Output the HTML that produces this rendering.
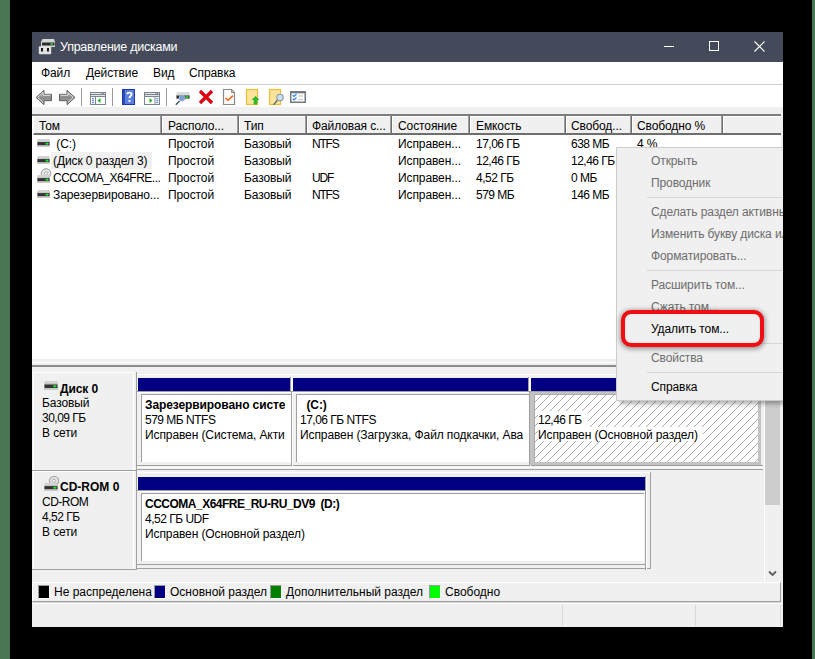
<!DOCTYPE html>
<html><head><meta charset="utf-8">
<style>
*{box-sizing:border-box;margin:0;padding:0}
html,body{width:815px;height:659px;overflow:hidden;background:#000}
body{position:relative;font-family:"Liberation Sans",sans-serif;font-size:12px;color:#000}
.a{position:absolute}
.t{position:absolute;white-space:nowrap;line-height:14px;letter-spacing:-0.1px}
.n{letter-spacing:-0.5px}
.nt{letter-spacing:-1.2px}
.b{font-weight:bold}
.g{left:0;top:0;width:10px;height:659px;background:#4a7552}
#clip{left:0;top:0;width:783px;height:627px;overflow:hidden}
.hsep{position:absolute;top:116px;width:3px;height:17px;border-left:1px solid #a0a0a0;border-right:1px solid #fff;background:#6e6e6e}
.dis{color:#6d6d6d}
.msep{position:absolute;left:647px;width:140px;height:1px;background:#d7d7d7}
</style></head><body>
<div class="a g"></div>
<div class="a g" style="left:812px;width:3px"></div>
<div id="clip" class="a">
  <div class="a" style="left:32px;top:32px;width:751px;height:595px;background:#f0f0f0"></div>
  <!-- title bar -->
  <div class="a" style="left:32px;top:32px;width:751px;height:30px;background:#444a59"></div>
  <div class="t" style="left:60px;top:40px;color:#fff;font-size:12.5px;letter-spacing:-0.25px">Управление дисками</div>
  <div class="a" style="left:664px;top:46px;width:10px;height:1px;background:#fff"></div>
  <div class="a" style="left:709px;top:41px;width:10px;height:10px;border:1px solid #fff"></div>
  <svg class="a" style="left:754px;top:41px" width="11" height="11" viewBox="0 0 11 11"><path d="M0.5 0.5L10.5 10.5M10.5 0.5L0.5 10.5" stroke="#fff" stroke-width="1.1"/></svg>
  <!-- menu bar -->
  <div class="a" style="left:32px;top:62px;width:751px;height:22px;background:#fff"></div>
  <div class="a" style="left:32px;top:84px;width:751px;height:1px;background:#cfcfcf"></div>
  <div class="t" style="left:41px;top:66px">Файл</div>
  <div class="t" style="left:86px;top:66px">Действие</div>
  <div class="t" style="left:153px;top:66px">Вид</div>
  <div class="t" style="left:189px;top:66px">Справка</div>
  <!-- toolbar -->
  <div class="a" style="left:32px;top:85px;width:751px;height:22px;background:#fff"></div>
  <svg class="a" style="left:0;top:0" width="0" height="0"><defs>
    <linearGradient id="ag" x1="0" y1="0" x2="0" y2="1"><stop offset="0" stop-color="#b4b4b4"/><stop offset="0.5" stop-color="#8c8c8c"/><stop offset="1" stop-color="#a4a4a4"/></linearGradient>
    <symbol id="drv" viewBox="0 0 13 9" preserveAspectRatio="none"><path d="M1 0H12L13 3.5V8.5H0V3.5Z" fill="#c6c6c6"/><rect x="1.5" y="0.6" width="10" height="1.2" fill="#dedede"/><rect x="0.5" y="3.5" width="12" height="3.5" fill="#333"/><rect x="0" y="7.5" width="13" height="1.5" fill="#c9c9c9"/><rect x="8.5" y="4.5" width="3" height="1.5" fill="#1fe030"/><rect x="9.5" y="3.8" width="1" height="3" fill="#1fe030"/></symbol>
  </defs></svg>
  <!-- title icon -->
  <svg class="a" style="left:38px;top:38px" width="18" height="17" viewBox="0 0 18 17"><path d="M4.5 1H16L17 4V9H3V4Z" fill="#d8d8d8"/><rect x="4" y="4.5" width="12.5" height="3" fill="#2c2c2c"/><rect x="12.5" y="5.3" width="2.5" height="1.5" fill="#2fe83c"/><rect x="0.8" y="8.2" width="12.4" height="8" rx="1" fill="#e2e2e2"/><rect x="3" y="10" width="2" height="3.5" fill="#1a1a1a"/><rect x="9" y="10" width="2" height="3.5" fill="#1a1a1a"/></svg>
  <!-- toolbar icons -->
  <svg class="a" style="left:35px;top:89px" width="18" height="17" viewBox="0 0 18 17"><path d="M1 8.5L9 1.3V5.3H16.5V11.7H9V15.7Z" fill="url(#ag)" stroke="#626262" stroke-width="1" stroke-linejoin="round"/><path d="M2.6 8.5L8 3.6V6.3H15.5M2.6 8.5L8 13.4" fill="none" stroke="#e8e8e8" stroke-width="0.9"/></svg>
  <svg class="a" style="left:58px;top:89px" width="18" height="17" viewBox="0 0 18 17"><path d="M17 8.5L9 1.3V5.3H1.5V11.7H9V15.7Z" fill="url(#ag)" stroke="#626262" stroke-width="1" stroke-linejoin="round"/><path d="M15.4 8.5L10 3.6V6.3H2.5M15.4 8.5L10 13.4" fill="none" stroke="#e8e8e8" stroke-width="0.9"/></svg>
  <div class="a" style="left:81px;top:88px;width:1px;height:18px;background:#9a9a9a"></div>
  <svg class="a" style="left:90px;top:92px" width="16" height="13" viewBox="0 0 16 13"><rect x="0.5" y="0.5" width="15" height="12" fill="#fff" stroke="#7b8590"/><rect x="1" y="1" width="14" height="1" fill="#e4e4e4"/><rect x="1" y="2" width="14" height="1" fill="#7b8590"/><rect x="1" y="3" width="14" height="1" fill="#e4e4e4"/><rect x="1" y="4" width="14" height="1" fill="#7b8590"/><rect x="11.5" y="1" width="1" height="1" fill="#7b8590"/><rect x="13" y="1" width="1" height="1" fill="#7b8590"/><rect x="5" y="5" width="1" height="7.5" fill="#7b8590"/><rect x="2" y="6.2" width="2" height="1" fill="#3a7ad8"/><rect x="2" y="8.2" width="2" height="1" fill="#3a7ad8"/><rect x="2" y="10.2" width="2" height="1" fill="#3a7ad8"/><path d="M7.5 8.5L10.5 6V11Z" fill="#22b022"/></svg>
  <div class="a" style="left:112px;top:88px;width:1px;height:18px;background:#9a9a9a"></div>
  <svg class="a" style="left:122px;top:89px" width="13" height="16" viewBox="0 0 13 16"><rect x="0" y="0" width="13" height="16" fill="#1c3aa8"/><rect x="3" y="1" width="9" height="14" fill="#5a80dc"/><rect x="1" y="1" width="2" height="14" fill="#2d4cb8"/><path d="M5.2 5.2C5.2 3.3 9.6 3.1 9.6 5.3C9.6 7 7.4 7.3 7.4 9.2" fill="none" stroke="#fff" stroke-width="1.8"/><rect x="6.5" y="11" width="1.9" height="1.9" fill="#fff"/></svg>
  <svg class="a" style="left:144px;top:92px" width="16" height="13" viewBox="0 0 16 13"><rect x="0.5" y="0.5" width="15" height="12" fill="#fff" stroke="#7b8590"/><rect x="1" y="1" width="14" height="1" fill="#e4e4e4"/><rect x="1" y="2" width="14" height="1" fill="#7b8590"/><rect x="1" y="3" width="14" height="1" fill="#e4e4e4"/><rect x="1" y="4" width="14" height="1" fill="#7b8590"/><rect x="11.5" y="1" width="1" height="1" fill="#7b8590"/><rect x="13" y="1" width="1" height="1" fill="#7b8590"/><rect x="10.5" y="5" width="1" height="7.5" fill="#7b8590"/><rect x="12.3" y="6.2" width="2" height="1" fill="#3a7ad8"/><rect x="12.3" y="8.2" width="2" height="1" fill="#3a7ad8"/><rect x="12.3" y="10.2" width="2" height="1" fill="#3a7ad8"/><path d="M8.5 8.5L5.5 6V11Z" fill="#22b022"/></svg>
  <div class="a" style="left:166px;top:88px;width:1px;height:18px;background:#9a9a9a"></div>
  <svg class="a" style="left:175px;top:91px" width="16" height="15" viewBox="0 0 16 15"><path d="M2 1H14L15 3.5V8.5H1V3.5Z" fill="#dcdcdc"/><rect x="1.5" y="4.5" width="13" height="3" fill="#2e2e2e"/><rect x="10.5" y="5.3" width="3" height="1.4" fill="#2fe83c"/><rect x="11.5" y="4.5" width="1" height="3" fill="#2fe83c"/><path d="M4.5 10L0.8 13.8" stroke="#4a5a68" stroke-width="1.6"/><circle cx="7" cy="7" r="2.9" fill="#7aa0d8" stroke="#9ab0c8" stroke-width="1"/></svg>
  <svg class="a" style="left:198px;top:89px" width="16" height="16" viewBox="0 0 16 16"><path d="M2 2L14 14M14 2L2 14" stroke="#e0000f" stroke-width="3.2"/></svg>
  <svg class="a" style="left:222px;top:88px" width="14" height="18" viewBox="0 0 14 18"><path d="M1.5 1.5H9.5L12.5 4.5V16.5H1.5Z" fill="#fbfbfb" stroke="#8a8a8a" stroke-width="1.2"/><path d="M9.5 1.5V4.5H12.5" fill="none" stroke="#8a8a8a" stroke-width="1"/><path d="M3.6 10L6 12.3L11 7.6" fill="none" stroke="#f0641e" stroke-width="1.5"/></svg>
  <svg class="a" style="left:245px;top:88px" width="16" height="18" viewBox="0 0 16 18"><rect x="1.5" y="1.5" width="11" height="15" fill="#fde49a" stroke="#e8be3a" stroke-width="1.2"/><path d="M10.5 8L14.5 12H12.3V16.5H8.7V12H6.5Z" fill="#2cb82c"/></svg>
  <svg class="a" style="left:268px;top:88px" width="17" height="18" viewBox="0 0 17 18"><rect x="1.5" y="1.5" width="11" height="15" fill="#fde49a" stroke="#e8be3a" stroke-width="1.2"/><path d="M9.5 12L5.5 16.8" stroke="#556070" stroke-width="1.3"/><circle cx="12" cy="9.5" r="3.2" fill="#c8e2f4" stroke="#8a96a4" stroke-width="1.1"/></svg>
  <svg class="a" style="left:290px;top:91px" width="16" height="12" viewBox="0 0 16 12"><rect x="0.75" y="0.75" width="14.5" height="10.5" fill="#fff" stroke="#737a80" stroke-width="1.5"/><rect x="0.75" y="0.75" width="14.5" height="1.6" fill="#737a80"/><path d="M2.8 4.2L4 5.4L6.5 3" fill="none" stroke="#2a86e8" stroke-width="1.3"/><path d="M2.8 7.7L4 8.9L6.5 6.5" fill="none" stroke="#2a86e8" stroke-width="1.3"/><rect x="8" y="4.5" width="5" height="0.9" fill="#b8b8b8"/><rect x="8" y="8.2" width="5" height="0.9" fill="#b8b8b8"/></svg>
  <!-- list view -->
  <div class="a" style="left:32px;top:114px;width:749px;height:245px;background:#fff;border-top:2px solid #7d7d7d"></div>
  <div class="a" style="left:33px;top:116px;width:748px;height:19px;background:#f0f0f0;border-bottom:2px solid #6e6e6e;border-left:1px solid #fff;border-top:1px solid #fff"></div>
  <div class="hsep" style="left:160px"></div>
  <div class="hsep" style="left:237px"></div>
  <div class="hsep" style="left:305px"></div>
  <div class="hsep" style="left:390px"></div>
  <div class="hsep" style="left:468px"></div>
  <div class="hsep" style="left:564px"></div>
  <div class="hsep" style="left:630px"></div>
  <div class="hsep" style="left:721px"></div>
  <div class="t" style="left:39px;top:119px">Том</div>
  <div class="t" style="left:168px;top:119px">Располо...</div>
  <div class="t" style="left:244px;top:119px">Тип</div>
  <div class="t" style="left:312px;top:119px">Файловая с...</div>
  <div class="t" style="left:398px;top:119px">Состояние</div>
  <div class="t" style="left:476px;top:119px">Емкость</div>
  <div class="t" style="left:571px;top:119px">Свобод...</div>
  <div class="t" style="left:637px;top:119px">Свободно %</div>
  <!-- rows -->
  <div class="a" style="left:51px;top:152px;width:101px;height:17px;background:#f0f0f0"></div>
  <svg class="a" style="left:37px;top:139px" width="13" height="8"><use href="#drv"/></svg>
  <svg class="a" style="left:37px;top:156px" width="13" height="8"><use href="#drv"/></svg>
  <svg class="a" style="left:40px;top:168px" width="12" height="11" viewBox="0 0 12 11"><circle cx="6" cy="5.5" r="4.8" fill="#e4e4e4" stroke="#9a9a9a" stroke-width="1"/><circle cx="6" cy="5.5" r="1.6" fill="#fff" stroke="#a0a0a0" stroke-width="0.8"/></svg>
  <svg class="a" style="left:37px;top:175px" width="13" height="8"><use href="#drv"/></svg>
  <svg class="a" style="left:37px;top:190px" width="13" height="8"><use href="#drv"/></svg>
  <div class="t" style="left:53px;top:137px">&nbsp;(C:)</div>
  <div class="t" style="left:53px;top:154px">(Диск 0 раздел 3)</div>
  <div class="t n" style="left:53px;top:171px">CCCOMA_X64FRE...</div>
  <div class="t" style="left:53px;top:188px">Зарезервировано...</div>
  <div class="t" style="left:168px;top:137px">Простой</div>
  <div class="t" style="left:168px;top:154px">Простой</div>
  <div class="t" style="left:168px;top:171px">Простой</div>
  <div class="t" style="left:168px;top:188px">Простой</div>
  <div class="t" style="left:244px;top:137px">Базовый</div>
  <div class="t" style="left:244px;top:154px">Базовый</div>
  <div class="t" style="left:244px;top:171px">Базовый</div>
  <div class="t" style="left:244px;top:188px">Базовый</div>
  <div class="t nt" style="left:312px;top:137px">NTFS</div>
  <div class="t nt" style="left:312px;top:171px">UDF</div>
  <div class="t nt" style="left:312px;top:188px">NTFS</div>
  <div class="t" style="left:398px;top:137px">Исправен...</div>
  <div class="t" style="left:398px;top:154px">Исправен...</div>
  <div class="t" style="left:398px;top:171px">Исправен...</div>
  <div class="t" style="left:398px;top:188px">Исправен...</div>
  <div class="t n" style="left:476px;top:137px">17,06 ГБ</div>
  <div class="t n" style="left:476px;top:154px">12,46 ГБ</div>
  <div class="t n" style="left:476px;top:171px">4,52 ГБ</div>
  <div class="t n" style="left:476px;top:188px">579 МБ</div>
  <div class="t n" style="left:571px;top:137px">638 МБ</div>
  <div class="t n" style="left:571px;top:154px">12,46 ГБ</div>
  <div class="t n" style="left:571px;top:171px">0 МБ</div>
  <div class="t n" style="left:571px;top:188px">146 МБ</div>
  <div class="t" style="left:637px;top:137px">4 %</div>

  <!-- splitter -->
  <div class="a" style="left:32px;top:359px;width:751px;height:3px;background:#f0f0f0"></div>
  <div class="a" style="left:32px;top:362px;width:751px;height:1px;background:#fff"></div>
  <div class="a" style="left:32px;top:365px;width:751px;height:2px;background:#8c8c8c"></div>

  <!-- graphic view: disk 0 -->
  <div class="a" style="left:33px;top:372px;width:100px;height:1px;background:#fff"></div>
  <div class="a" style="left:33px;top:372px;width:1px;height:98px;background:#fff"></div>
  <div class="a" style="left:133px;top:372px;width:1px;height:98px;background:#fff"></div>
  <div class="a" style="left:32px;top:470px;width:105px;height:1px;background:#a0a0a0"></div>
  <div class="a" style="left:136px;top:372px;width:1px;height:98px;background:#a0a0a0"></div>
  <div class="a" style="left:137px;top:374px;width:624px;height:1px;background:#fff"></div>
  <div class="a" style="left:137px;top:465px;width:626px;height:1px;background:#a0a0a0"></div>
  <div class="a" style="left:137px;top:467px;width:626px;height:1px;background:#fff"></div>
  <div class="a" style="left:137px;top:469px;width:626px;height:1px;background:#a0a0a0"></div>
  <svg class="a" style="left:44px;top:381px" width="14" height="9"><use href="#drv"/></svg>
  <div class="t b" style="left:60px;top:382px">Диск 0</div>
  <div class="t" style="left:42px;top:396px">Базовый</div>
  <div class="t n" style="left:42px;top:411px">30,09 ГБ</div>
  <div class="t" style="left:42px;top:426px">В сети</div>
  <div class="a" style="left:138px;top:378px;width:152px;height:13px;background:#000080"></div>
  <div class="a" style="left:136px;top:391px;width:157px;height:1px;background:#a0a0a0"></div>
  <div class="a" style="left:137px;top:392px;width:154px;height:1px;background:#fff"></div>
  <div class="a" style="left:141px;top:394px;width:150px;height:1px;background:#a0a0a0"></div>
  <div class="a" style="left:141px;top:394px;width:1px;height:68px;background:#a0a0a0"></div>
  <div class="a" style="left:142px;top:395px;width:149px;height:67px;background:#fff"></div>
  <div class="a" style="left:290px;top:377px;width:1px;height:14px;background:#a0a0a0"></div>
  <div class="a" style="left:291px;top:377px;width:2px;height:14px;background:#fff"></div>
  <div class="a" style="left:291px;top:391px;width:1px;height:75px;background:#a0a0a0"></div>
  <div class="a" style="left:292px;top:392px;width:1px;height:74px;background:#fff"></div>
  <div class="t b" style="left:145px;top:398px;width:140px;overflow:hidden">Зарезервировано систе</div>
  <div class="t n" style="left:145px;top:413px">579 МБ NTFS</div>
  <div class="t" style="left:145px;top:428px;width:140px;overflow:hidden">Исправен (Система, Активен, Основной раздел)</div>
  <div class="a" style="left:293px;top:378px;width:235px;height:13px;background:#000080"></div>
  <div class="a" style="left:291px;top:391px;width:240px;height:1px;background:#a0a0a0"></div>
  <div class="a" style="left:292px;top:392px;width:237px;height:1px;background:#fff"></div>
  <div class="a" style="left:296px;top:394px;width:233px;height:1px;background:#a0a0a0"></div>
  <div class="a" style="left:296px;top:394px;width:1px;height:68px;background:#a0a0a0"></div>
  <div class="a" style="left:297px;top:395px;width:232px;height:67px;background:#fff"></div>
  <div class="a" style="left:528px;top:377px;width:1px;height:14px;background:#a0a0a0"></div>
  <div class="a" style="left:529px;top:377px;width:2px;height:14px;background:#fff"></div>
  <div class="a" style="left:529px;top:391px;width:1px;height:75px;background:#a0a0a0"></div>
  <div class="a" style="left:530px;top:392px;width:1px;height:74px;background:#fff"></div>
  <div class="t b" style="left:300px;top:398px">&nbsp; (C:)</div>
  <div class="t n" style="left:300px;top:413px">17,06 ГБ NTFS</div>
  <div class="t" style="left:300px;top:428px;width:223px;overflow:hidden">Исправен (Загрузка, Файл подкачки, Аварийный дамп, Основной раздел)</div>
  <div class="a" style="left:531px;top:378px;width:230px;height:13px;background:#000080"></div>
  <div class="a" style="left:529px;top:391px;width:232px;height:74px;background:#c3c3c3"></div>
  <div class="a" style="left:529px;top:391px;width:1px;height:74px;background:#a0a0a0"></div>
  <div class="a" style="left:529px;top:391px;width:232px;height:1px;background:#a0a0a0"></div>
  <div class="a" style="left:534px;top:394px;width:224px;height:68px;background:#ababab"></div>
  <svg class="a" style="left:535px;top:395px" width="223" height="67"><defs><pattern id="h" width="8" height="8" patternUnits="userSpaceOnUse" x="5" y="2"><rect width="8" height="8" fill="#fff"/><path d="M-1 9L9 -1" stroke="#ababab" stroke-width="1"/></pattern></defs><rect width="223" height="67" fill="url(#h)"/></svg>
  <div class="a" style="left:538px;top:411px;width:50px;height:16px;background:#fff"></div>
  <div class="a" style="left:538px;top:427px;width:165px;height:14px;background:#fff"></div>
  <div class="t n" style="left:538px;top:413px">12,46 ГБ</div>
  <div class="t" style="left:538px;top:428px">Исправен (Основной раздел)</div>
  <!-- graphic view: CD-ROM -->
  <div class="a" style="left:33px;top:471px;width:100px;height:1px;background:#fff"></div>
  <div class="a" style="left:33px;top:471px;width:1px;height:98px;background:#fff"></div>
  <div class="a" style="left:133px;top:471px;width:1px;height:98px;background:#fff"></div>
  <div class="a" style="left:32px;top:569px;width:105px;height:1px;background:#a0a0a0"></div>
  <div class="a" style="left:136px;top:471px;width:1px;height:98px;background:#a0a0a0"></div>
  <div class="a" style="left:137px;top:472px;width:513px;height:1px;background:#fff"></div>
  <div class="a" style="left:650px;top:472px;width:1px;height:97px;background:#a0a0a0"></div>
  <div class="a" style="left:137px;top:568px;width:514px;height:1px;background:#a0a0a0"></div>
  <div class="a" style="left:137px;top:564px;width:509px;height:1px;background:#a0a0a0"></div>
  <svg class="a" style="left:44px;top:475px" width="15" height="17" viewBox="0 0 15 17"><circle cx="10" cy="5.8" r="4.6" fill="#e2e2e2" stroke="#a2a2a2" stroke-width="1.1"/><circle cx="10" cy="5.8" r="1.6" fill="#fff" stroke="#a8a8a8" stroke-width="0.9"/><use href="#drv" x="0" y="8" width="14" height="8"/></svg>
  <div class="t b" style="left:60px;top:480px;letter-spacing:0">CD-ROM 0</div>
  <div class="t n" style="left:42px;top:495px;letter-spacing:-0.5px">CD-ROM</div>
  <div class="t n" style="left:42px;top:510px">4,52 ГБ</div>
  <div class="t" style="left:42px;top:525px">В сети</div>
  <div class="a" style="left:138px;top:477px;width:507px;height:13px;background:#000080"></div>
  <div class="a" style="left:136px;top:490px;width:510px;height:1px;background:#a0a0a0"></div>
  <div class="a" style="left:137px;top:491px;width:508px;height:1px;background:#fff"></div>
  <div class="a" style="left:141px;top:493px;width:503px;height:1px;background:#a0a0a0"></div>
  <div class="a" style="left:141px;top:493px;width:1px;height:68px;background:#a0a0a0"></div>
  <div class="a" style="left:142px;top:494px;width:502px;height:67px;background:#fff"></div>
  <div class="a" style="left:645px;top:476px;width:1px;height:94px;background:#a0a0a0"></div>
  <div class="a" style="left:646px;top:476px;width:1px;height:94px;background:#fff"></div>
  <div class="t b n" style="left:145px;top:497px;letter-spacing:-0.5px">CCCOMA_X64FRE_RU-RU_DV9&nbsp; (D:)</div>
  <div class="t n" style="left:145px;top:512px">4,52 ГБ UDF</div>
  <div class="t" style="left:145px;top:527px">Исправен (Основной раздел)</div>

  <!-- scrollbar -->
  <div class="a" style="left:764px;top:367px;width:1px;height:215px;background:#fff"></div>
  <div class="a" style="left:765px;top:367px;width:15px;height:215px;background:#f0f0f0"></div>
  <div class="a" style="left:765px;top:384px;width:15px;height:121px;background:#cdcdcd"></div>
  <svg class="a" style="left:768px;top:570px" width="9" height="7" viewBox="0 0 9 7"><path d="M1 1.5L4.5 5L8 1.5" stroke="#606060" stroke-width="1.8" fill="none"/></svg>

  <!-- context menu -->
  <div class="a" style="left:620px;top:151px;width:200px;height:253px;background:rgba(0,0,0,0.3);filter:blur(2px)"></div>
  <div class="a" style="left:616px;top:147px;width:200px;height:254px;background:#f0f0f0;border:1px solid #cccccc"></div>
  <div class="msep" style="top:197px"></div>
  <div class="msep" style="top:270px"></div>
  <div class="msep" style="top:343px"></div>
  <div class="msep" style="top:372px"></div>
  <div class="t dis" style="left:651px;top:154px">Открыть</div>
  <div class="t dis" style="left:651px;top:176px">Проводник</div>
  <div class="t dis" style="left:651px;top:205px">Сделать раздел активным</div>
  <div class="t dis" style="left:651px;top:227px">Изменить букву диска или путь...</div>
  <div class="t dis" style="left:651px;top:249px">Форматировать...</div>
  <div class="t dis" style="left:651px;top:278px">Расширить том...</div>
  <div class="t dis" style="left:651px;top:300px">Сжать том...</div>
  <div class="t" style="left:651px;top:322px">Удалить том...</div>
  <div class="t dis" style="left:651px;top:351px">Свойства</div>
  <div class="t" style="left:651px;top:380px">Справка</div>
  <!-- red highlight -->
  <div class="a" style="left:621px;top:310px;width:143px;height:37px;border-radius:10px;box-shadow:0 1px 5px 1px rgba(0,0,0,0.4), inset 0 0 5px 1px rgba(0,0,0,0.3)"></div>
  <div class="a" style="left:621px;top:310px;width:143px;height:37px;border:4.5px solid #f20d12;border-radius:10px"></div>

  <!-- legend -->
  <div class="a" style="left:32px;top:582px;width:749px;height:20px;border-top:1px solid #fff;border-left:1px solid #fff;border-bottom:1px solid #a0a0a0;border-right:1px solid #a0a0a0;box-shadow:0 1px 0 #d8d8d8"></div>
  <div class="a" style="left:38px;top:585px;width:12px;height:14px;background:#000;border:1px solid #fff;border-top-color:#9a9a9a;border-left-color:#9a9a9a"></div>
  <div class="t" style="left:54px;top:585px;letter-spacing:0">Не распределена</div>
  <div class="a" style="left:154px;top:585px;width:12px;height:14px;background:#000080;border:1px solid #fff;border-top-color:#9a9a9a;border-left-color:#9a9a9a"></div>
  <div class="t" style="left:170px;top:585px;letter-spacing:0">Основной раздел</div>
  <div class="a" style="left:270px;top:585px;width:12px;height:14px;background:#008000;border:1px solid #fff;border-top-color:#9a9a9a;border-left-color:#9a9a9a"></div>
  <div class="t" style="left:286px;top:585px;letter-spacing:0">Дополнительный раздел</div>
  <div class="a" style="left:429px;top:585px;width:12px;height:14px;background:#00ff00;border:1px solid #fff;border-top-color:#9a9a9a;border-left-color:#9a9a9a"></div>
  <div class="t" style="left:445px;top:585px;letter-spacing:0">Свободно</div>
  <!-- status bar -->
  <div class="a" style="left:32px;top:603px;width:751px;height:1px;background:#fff"></div>
  <div class="a" style="left:562px;top:605px;width:1px;height:21px;background:#d9d9d9"></div>
  <div class="a" style="left:695px;top:605px;width:1px;height:21px;background:#d9d9d9"></div>
  <div class="a" style="left:780px;top:605px;width:1px;height:21px;background:#d9d9d9"></div>
</div>
</body></html>
